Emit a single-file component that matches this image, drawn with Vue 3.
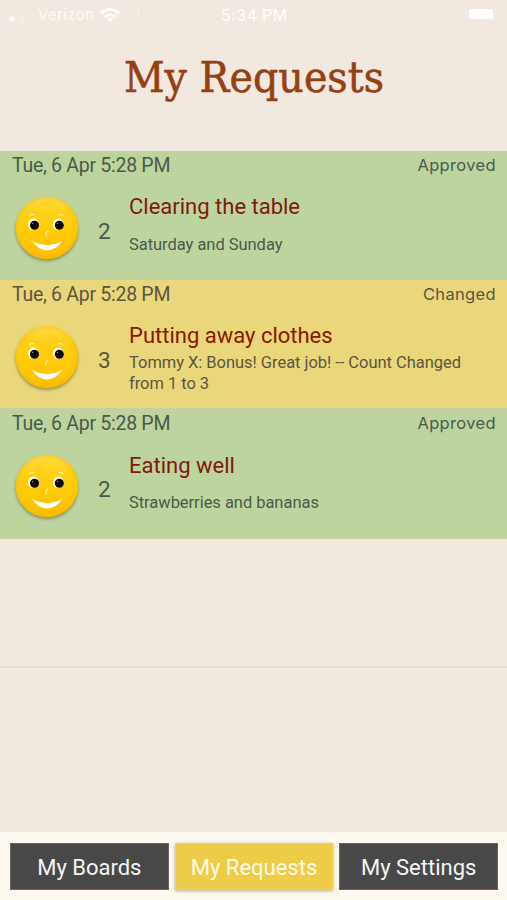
<template>
  <div class="screen">
    <div class="status-bar">
      <svg class="signal" width="28" height="16" viewBox="0 0 28 16">
        <circle cx="4" cy="10" r="2.5" fill="#fff" />
        <rect x="12" y="6" width="5" height="8" rx="1" fill="#fff" opacity="0.14" />
        <rect x="20" y="3" width="5" height="11" rx="1" fill="#fff" opacity="0.08" />
      </svg>
      <span class="carrier">Verizon</span>
      <svg class="wifi" width="20" height="15" viewBox="0 0 20 15">
        <g fill="none" stroke="#fff" stroke-width="2.7">
          <path d="M1 5.2Q10-2.2 19 5.2" />
          <path d="M4.4 8.8Q10 4.3 15.6 8.8" />
        </g>
        <path d="M6.8 11Q10 8.7 13.2 11L10 14.2Z" fill="#fff" />
      </svg>
      <svg class="spinner" width="10" height="14" viewBox="0 0 10 14">
        <path d="M8 1L6.5 3M9 6H6M3 6L4.5 7.5M2 9L1.5 12M5 9.5V12" stroke="#fff" stroke-width="1.3" opacity="0.45" />
      </svg>
      <span class="clock">5:34 PM</span>
      <svg class="moon" width="9" height="13" viewBox="0 0 9 13">
        <path d="M3 1Q0 9 8 11Q1 13 1 6Q1 3 3 1Z" fill="#fff" opacity="0.3" />
      </svg>
      <svg class="battery" width="34" height="15" viewBox="0 0 34 15">
        <rect x="1" y="0.5" width="28" height="13" rx="3" fill="none" stroke="#fff" opacity="0.15" />
        <rect x="3" y="2" width="24" height="10" rx="2" fill="#fff" />
        <path d="M31 4.5Q33 7 31 9.5Z" fill="#fff" opacity="0.3" />
      </svg>
    </div>

    <h1>
      <svg width="507" height="60" viewBox="0 0 507 60">
        <text x="124" y="42" textLength="260" lengthAdjust="spacingAndGlyphs">My Requests</text>
      </svg>
    </h1>

    <div class="requests">
      <div v-for="(item, i) in requests" :key="i" class="request" :class="item.status.toLowerCase()">
        <div class="request-head">
          <span class="date">{{ item.date }}</span>
          <span class="status">{{ item.status }}</span>
        </div>
        <div class="request-body">
          <svg class="smiley" width="70" height="72" viewBox="0 0 70 72">
            <defs>
              <linearGradient :id="'face' + i" x1="0" y1="0" x2="0" y2="1">
                <stop offset="0" stop-color="#ffdb4a" />
                <stop offset="0.22" stop-color="#ffd21c" />
                <stop offset="0.6" stop-color="#ffca05" />
                <stop offset="1" stop-color="#fcbd00" />
              </linearGradient>
              <radialGradient :id="'rim' + i">
                <stop offset="0.84" stop-color="#f3ae00" stop-opacity="0" />
                <stop offset="1" stop-color="#f3ae00" stop-opacity="0.3" />
              </radialGradient>
            </defs>
            <circle class="face" cx="34.8" cy="35" r="31.2" :fill="`url(#face${i})`" />
            <circle cx="34.8" cy="35" r="31.2" :fill="`url(#rim${i})`" />
            <ellipse cx="21.3" cy="31.3" rx="5.2" ry="5.8" fill="#fff" />
            <ellipse cx="46.2" cy="31.3" rx="5.2" ry="5.8" fill="#fff" />
            <circle cx="22.5" cy="32.2" r="4.5" fill="#080808" />
            <circle cx="47.3" cy="32.2" r="4.5" fill="#080808" />
            <circle cx="20.7" cy="30.4" r="0.6" fill="#aaa" />
            <circle cx="45.5" cy="30.4" r="0.6" fill="#aaa" />
            <g fill="none" stroke="#fff3a8" stroke-width="1.2" stroke-linecap="round">
              <path d="M17.8 22.6Q20 20.7 22 21.8" />
              <path d="M46.5 21.8Q49 20.7 51 22.9" />
              <path d="M35.8 38L33.9 40.5Q33.5 41.5 34.3 43" />
            </g>
            <path d="M20 47.8Q35 56.5 50.4 47.8Q44 57.5 35 57.5Q26 57.5 20 47.8Z" fill="#fff" />
          </svg>
          <span class="count">{{ item.count }}</span>
          <div class="details">
            <div class="name">{{ item.name }}</div>
            <div class="note"><span>{{ item.note }}</span></div>
          </div>
        </div>
      </div>
      <div class="request empty"></div>
    </div>

    <nav class="tabs">
      <button v-for="tab in tabs" :key="tab" :class="{ active: tab === activeTab }" @click="activeTab = tab">
        {{ tab }}
      </button>
    </nav>
  </div>
</template>

<script setup>
import { ref } from 'vue'

const requests = [
  { date: 'Tue, 6 Apr 5:28 PM', status: 'Approved', count: 2, name: 'Clearing the table', note: 'Saturday and Sunday' },
  { date: 'Tue, 6 Apr 5:28 PM', status: 'Changed', count: 3, name: 'Putting away clothes', note: 'Tommy X: Bonus! Great job! -- Count Changed from 1 to 3' },
  { date: 'Tue, 6 Apr 5:28 PM', status: 'Approved', count: 2, name: 'Eating well', note: 'Strawberries and bananas' }
]

const tabs = ['My Boards', 'My Requests', 'My Settings']
const activeTab = ref('My Requests')
</script>

<style>
body {
  margin: 0;
}
</style>

<style scoped>
.screen {
  display: flex;
  flex-direction: column;
  height: 900px;
  background: #f1e9e0;
  font-family: Roboto, "Liberation Sans", sans-serif;
  color: #4a5a4a;
}
.status-bar {
  display: flex;
  align-items: center;
  height: 30px;
  padding-left: 8px;
  box-sizing: border-box;
  color: #fff;
  font-family: Inter, sans-serif;
  font-size: 15px;
  line-height: 30px;
}
.status-bar svg {
  flex: none;
}
.signal {
  margin-top: 4px;
}
.carrier {
  width: 58px;
  margin-left: 2px;
  letter-spacing: 0.4px;
  opacity: 0.75;
}
.wifi {
  margin-left: 4px;
}
.spinner {
  margin-left: 11px;
}
.clock {
  width: 68px;
  margin-left: 80px;
  font-size: 16px;
  font-weight: 500;
  letter-spacing: 0.3px;
  white-space: nowrap;
  opacity: 0.85;
}
.moon {
  margin-left: 158px;
}
.battery {
  margin: -2px 0 0 10px;
}
h1 {
  height: 120.5px;
  margin: 0;
  padding-top: 20px;
  box-sizing: border-box;
}
h1 svg {
  display: block;
}
h1 text {
  font-family: "Roboto Slab", "DejaVu Serif", serif;
  font-size: 42px;
  font-weight: 400;
  fill: #963f12;
  stroke: #963f12;
  stroke-width: 0.6px;
}
.requests {
  flex: 1;
}
.request {
  height: 129.4px;
  box-sizing: border-box;
  border-bottom: 1px solid #cbd09a;
}
.approved {
  background: #bdd49f;
}
.changed {
  background: #ead77c;
  color: #5b553f;
}
.request-head {
  display: flex;
  justify-content: space-between;
  height: 29px;
  padding: 0 11px 0 12px;
  line-height: 28px;
}
.date {
  font-size: 19.5px;
  line-height: 29px;
  letter-spacing: -0.28px;
}
.status {
  font-family: Inter, sans-serif;
  font-size: 16.5px;
  letter-spacing: 0.35px;
}
.request-body {
  display: flex;
  height: 99px;
}
.smiley {
  flex: none;
  margin: 13px 0 0 12px;
}
.face {
  filter: drop-shadow(0 2px 1.5px rgba(80, 85, 30, 0.5));
}
.count {
  width: 13px;
  margin: 37px 0 0 16px;
  font-size: 22.5px;
  line-height: 28px;
}
.details {
  width: 345px;
  margin: 13.5px 0 0 18px;
}
.name {
  height: 29px;
  font-size: 22px;
  line-height: 28px;
  color: #7d1a0c;
}
.changed .name {
  color: #881800;
}
.note {
  display: flex;
  align-items: center;
  height: 42px;
  margin-top: 1px;
  font-size: 16.5px;
  line-height: 21px;
  letter-spacing: -0.04px;
}
.empty {
  border-bottom: 2px solid #e6dfcc;
}
.tabs {
  display: flex;
  gap: 6px;
  height: 68px;
  padding: 11px 9px 0 10px;
  box-sizing: border-box;
  background: #fef9ee;
}
button {
  flex: 1;
  height: 47px;
  padding: 1px 0 0;
  border: 1px solid #656565;
  background: #484848;
  color: #f5f5f5;
  font-family: inherit;
  font-size: 22px;
}
button.active {
  border-color: #efd060;
  background: #eecb48;
  color: #fffbe6;
  box-shadow: 0 1px 3px rgba(100, 90, 50, 0.5);
}
</style>
